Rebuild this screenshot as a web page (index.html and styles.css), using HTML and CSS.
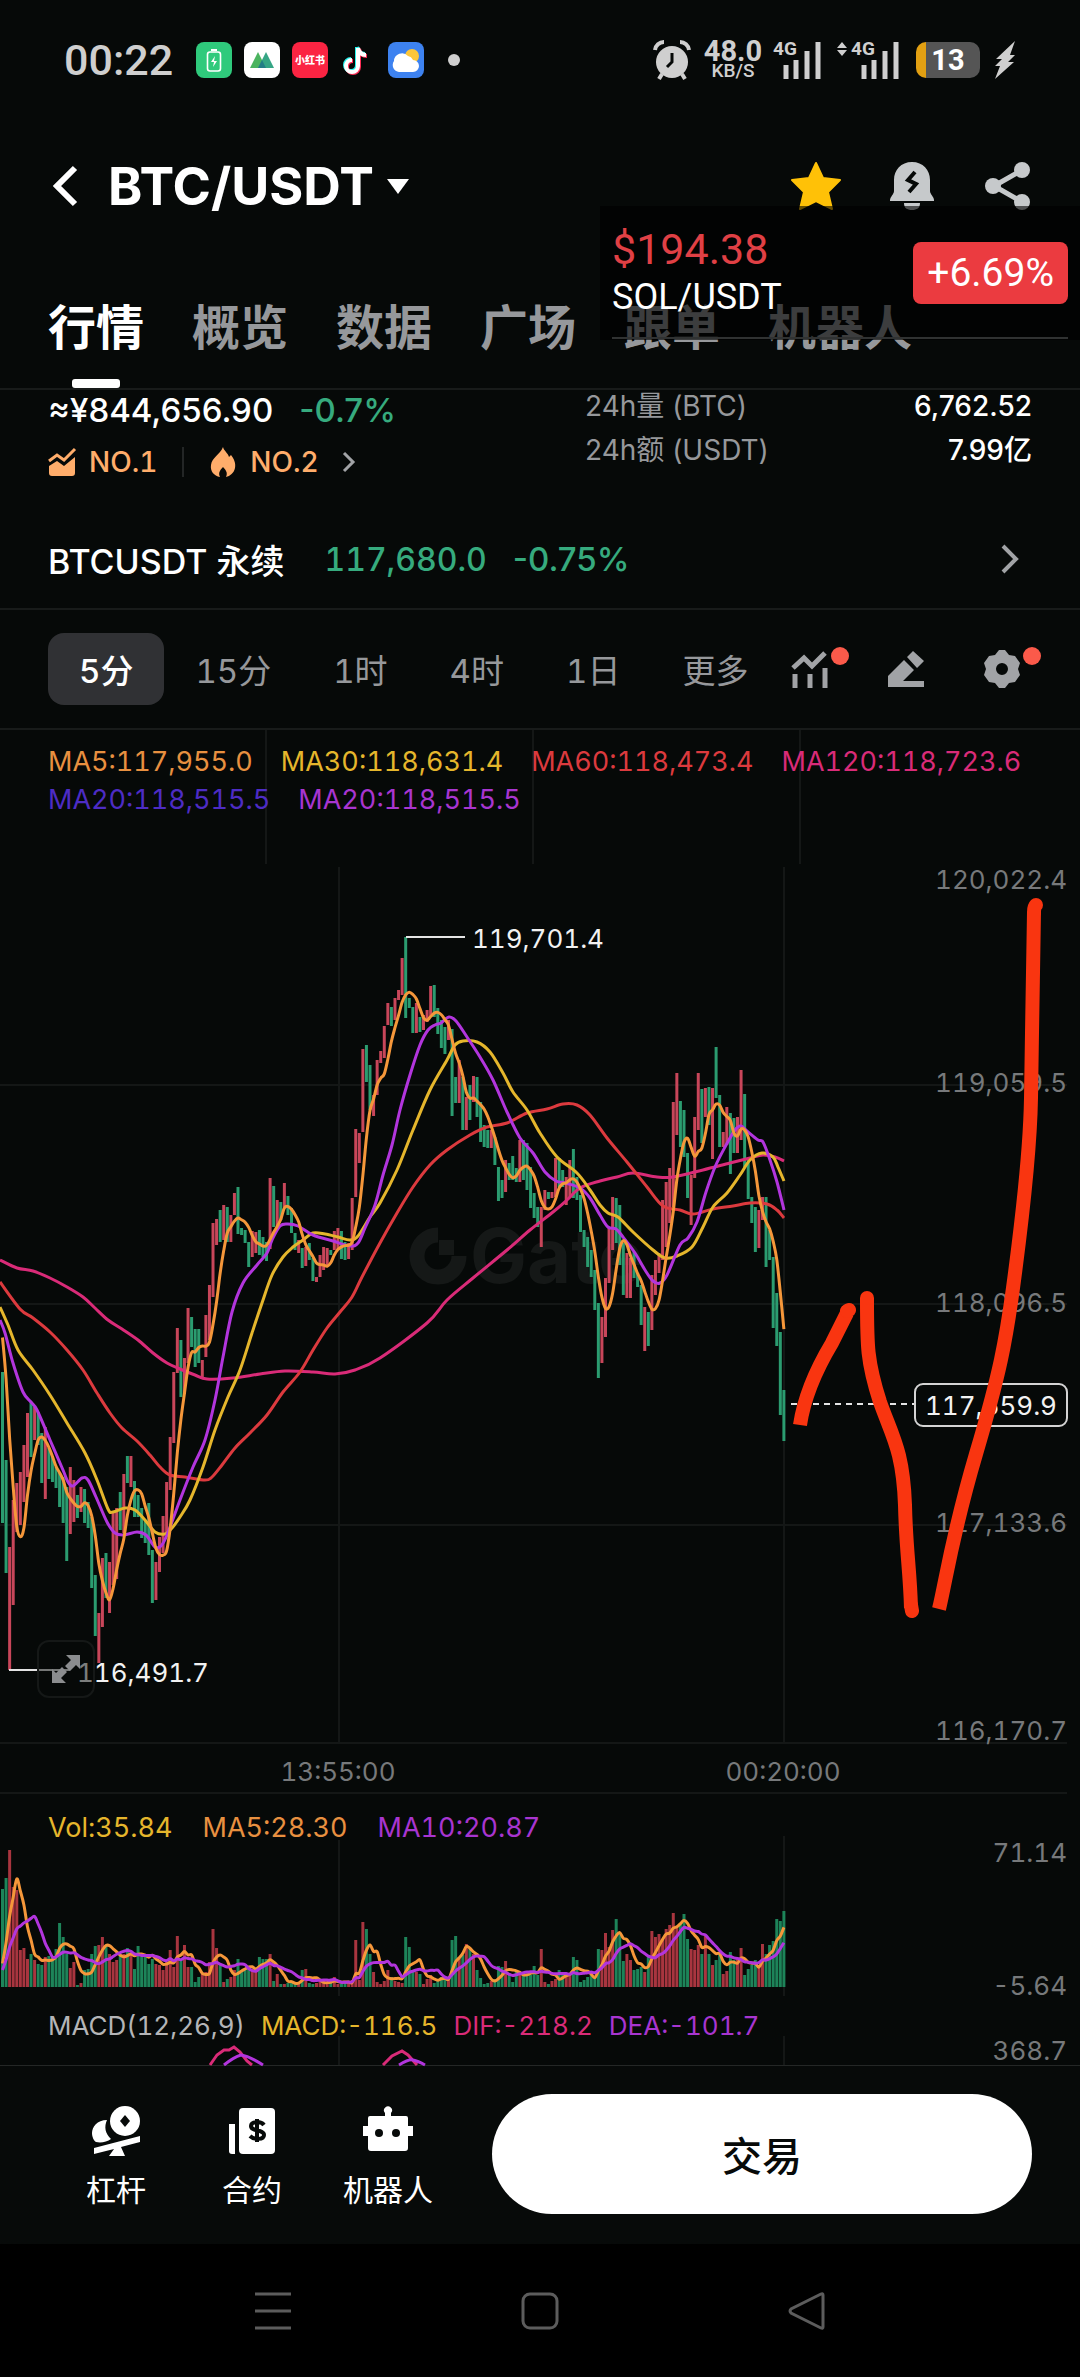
FILE: index.html
```html
<!DOCTYPE html>
<html lang="zh-CN">
<head>
    <meta charset="UTF-8" />
    <meta name="viewport" content="width=device-width, initial-scale=1.0" />
    <title>BTC/USDT</title>
    <link rel="stylesheet" href="styles.css">
</head>
<body>
    <div class="status-bar">
        <div class="status-left">
            <span class="clock">00:22</span>
            <svg class="app-icon" viewBox="0 0 36 36">
                <rect width="36" height="36" rx="8" fill="#2fca7c" />
                <rect x="11.500" y="10" width="13" height="19" rx="2.500" fill="none" stroke="#fff" stroke-width="1.600" />
                <path d="M15 8h6" stroke="#fff" stroke-width="2" />
                <path d="M19 14l-4 6h3l-1 5 4-6h-3z" fill="#fff" />
            </svg>
            <svg class="app-icon" viewBox="0 0 36 36">
                <rect width="36" height="36" rx="8" fill="#fff" />
                <path d="M6 26l8-16 8 16z" fill="#4bb45f" />
                <path d="M14 26l8-16 8 16z" fill="#36a585" />
                <path d="M14 26l4-8 4 8z" fill="#237d86" />
            </svg>
            <svg class="app-icon" viewBox="0 0 36 36">
                <rect width="36" height="36" rx="8" fill="#fb2442" />
                <text x="18" y="22" text-anchor="middle" class="red-note">小红书</text>
            </svg>
            <svg class="app-icon" viewBox="0 0 36 36">
                <g fill="none" stroke-width="4">
                    <path d="M17 5v18a6 6 0 1 1-6-6M17 5c1 5 4 7 8 7" stroke="#25f4ee" />
                    <path d="M19 7v18a6 6 0 1 1-6-6M19 7c1 5 4 7 8 7" stroke="#fe2c55" />
                    <path d="M18 6v18a6 6 0 1 1-6-6M18 6c1 5 4 7 8 7" stroke="#fff" />
                </g>
            </svg>
            <svg class="app-icon" viewBox="0 0 36 36">
                <rect width="36" height="36" rx="8" fill="#3d82f0" />
                <circle cx="24" cy="14" r="7" fill="#fcc63a" />
                <path d="M11 30a7 7 0 0 1-5-11 8 8 0 0 1 14-5 7 7 0 0 1 5 4 6 6 0 0 1 0 12z" fill="#fff" />
            </svg>
            <span class="more-dot"></span>
        </div>
        <div class="status-right">
            <svg class="alarm" viewBox="0 0 38 40">
                <circle cx="19" cy="22" r="16" />
                <path d="M2 10a9 9 0 0 1 9-8M27 2a9 9 0 0 1 9 8" class="alarm-ear" />
                <path d="M9 34l-3 5M29 34l3 5" class="alarm-foot" />
                <path d="M19 13v9l-5 5" class="alarm-hand" />
            </svg>
            <div class="speed"><b>48.0</b><span>KB/S</span></div>
            <div class="signal">
                <span>4G</span>
                <svg viewBox="0 0 40 38"><path d="M3 24v14M13 19v19M24 10v28M35 1v37" /></svg>
            </div>
            <div class="signal second">
                <svg class="arrows" viewBox="0 0 10 16"><path d="M0 7l5-6 5 6zM0 9l5 6 5-6z" /></svg>
                <span>4G</span>
                <svg viewBox="0 0 40 38"><path d="M3 24v14M13 19v19M24 10v28M35 1v37" /></svg>
            </div>
            <div class="battery">13</div>
            <svg class="bolt" viewBox="0 0 22 38"><path d="M21 0L2 18h6L1 25h5L1 38 20 21h-6l7-7h-5z" /></svg>
        </div>
    </div>

    <header class="header">
        <button class="icon-btn back" aria-label="返回"><svg viewBox="0 0 28 42"><path d="M23 3L5 21l18 18" /></svg></button>
        <button class="pair">BTC/USDT <svg viewBox="0 0 24 17"><path d="M1 1h22L12 16z" /></svg></button>
        <div class="header-actions">
            <button class="icon-btn" aria-label="收藏">
                <svg viewBox="0 0 50 50"><path class="star" d="M25 2l7 15 17 2-12 12 4 17-16-8-16 8 4-17L1 19l17-2z" /></svg>
            </button>
            <button class="icon-btn" aria-label="提醒">
                <svg viewBox="0 0 50 50">
                    <path class="light" d="M25 1c11 0 18 8 18 18v11c0 3 4 6 4 9v1H3v-1c0-3 4-6 4-9V19C7 9 14 1 25 1zM17 42h16c0 5-3 7-8 7s-8-2-8-7z" />
                    <path d="M28 11l-7 8 8 4-7 8" fill="none" stroke="#060908" stroke-width="4" />
                </svg>
            </button>
            <button class="icon-btn" aria-label="分享">
                <svg viewBox="0 0 50 50">
                    <path d="M39 9L11 25l28 16" fill="none" stroke="#c6c9cb" stroke-width="5" />
                    <circle class="light" cx="10" cy="25" r="8" />
                    <circle class="light" cx="39" cy="9" r="8" />
                    <circle class="light" cx="39" cy="41" r="8" />
                </svg>
            </button>
        </div>
    </header>

    <nav class="tabs">
        <a href="#" class="active">行情</a>
        <a href="#">概览</a>
        <a href="#">数据</a>
        <a href="#">广场</a>
        <a href="#">跟单</a>
        <a href="#">机器人</a>
    </nav>

    <!-- floating price widget -->
    <div class="ticker">
        <div class="ticker-text">
            <span class="ticker-price">$194.38</span>
            <span class="ticker-pair">SOL/USDT</span>
        </div>
        <span class="ticker-badge">+6.69%</span>
    </div>

    <section class="summary">
        <div class="summary-left">
            <div class="fiat"><span>≈¥844,656.90</span><span class="green">-0.7%</span></div>
            <div class="ranks">
                <svg class="rank-icon" viewBox="0 0 28 30"><path d="M1 14l8-6 7 5L27 2" fill="none" stroke="#ffad6b" stroke-width="3" /><path d="M1 19l8-5 7 5 11-9v16a3 3 0 0 1-3 3H4a3 3 0 0 1-3-3z" /></svg>
                <a href="#">NO.1</a>
                <span class="divider"></span>
                <svg class="rank-icon" viewBox="0 0 28 30"><path d="M14 0c1 4 5 6 6 10l2-2c3 4 5 8 4 13-1 5-5 8-9 9 2-4 0-7-3-10-3 3-5 6-3 10-6-1-10-6-9-12C3 10 11 8 14 0z" /></svg>
                <a href="#">NO.2</a>
                <svg class="rank-arrow" viewBox="0 0 14 22"><path d="M2 2l9 9-9 9" /></svg>
            </div>
        </div>
        <dl class="stats">
            <dt>24h量 (BTC)</dt><dd>6,762.52</dd>
            <dt>24h额 (USDT)</dt><dd>7.99亿</dd>
        </dl>
    </section>

    <a href="#" class="contract">
        <span>BTCUSDT 永续</span>
        <span class="green contract-price">117,680.0</span>
        <span class="green contract-change">-0.75%</span>
        <svg viewBox="0 0 20 32"><path d="M3 3l13 13L3 29" /></svg>
    </a>

    <div class="toolbar">
        <button class="period active">5分</button>
        <button class="period">15分</button>
        <button class="period">1时</button>
        <button class="period">4时</button>
        <button class="period">1日</button>
        <button class="period more">更多</button>
        <div class="tools">
            <button class="tool new" aria-label="指标">
                <svg viewBox="0 0 40 40"><path d="M3 19L14 9l8 8L35 4M5 25v14M20 25v14M35 19v20" fill="none" stroke="#a1a3a6" stroke-width="5" /></svg>
            </button>
            <button class="tool" aria-label="画线">
                <svg viewBox="0 0 40 40"><path d="M2 38V27l16-16 10 10-11 11h21v6zM21 8l6-6 11 10-7 7z" /></svg>
            </button>
            <button class="tool new" aria-label="设置">
                <svg viewBox="0 0 40 40"><path fill-rule="evenodd" d="M17 1h6l4 5 6 1 5 7-2 6 2 6-5 7-6 1-4 5h-6l-4-5-6-1-5-7 2-6-2-6 5-7 6-1zM20 14a6 6 0 1 0 0 12 6 6 0 0 0 0-12z" /></svg>
            </button>
        </div>
    </div>

    <main class="chart">
        <div class="legend ma-legend">
            <span class="c-orange">MA5:117,955.0</span>
            <span class="c-yellow">MA30:118,631.4</span>
            <span class="c-red">MA60:118,473.4</span>
            <span class="c-pink">MA120:118,723.6</span>
            <span class="c-indigo">MA20:118,515.5</span>
            <span class="c-purple">MA20:118,515.5</span>
        </div>

        <div class="kline">
            <svg viewBox="0 864 1080 930">
                <path class="grid" d="M339 867V1743M784 867V1743M0 1085H1067M0 1304H1067M0 1525H1067M0 1743H1067M0 1793H1067" />
                <g class="watermark">
                    <path d="M438 1235a21 21 0 1 0 21 21" fill="none" stroke="#151817" stroke-width="15" />
                    <rect x="439" y="1240" width="15" height="15" />
                    <text x="470" y="1283">Gate</text>
                </g>
                <g id="candles"></g>
                <g id="ma-lines" class="lines"></g>
                <g class="axis">
                    <text x="1067" y="889">120,022.4</text>
                    <text x="1067" y="1092">119,059.5</text>
                    <text x="1067" y="1312">118,096.5</text>
                    <text x="1067" y="1532">117,133.6</text>
                    <text x="1067" y="1740">116,170.7</text>
                </g>
                <g class="axis time">
                    <text x="338" y="1781">13:55:00</text>
                    <text x="783" y="1781">00:20:00</text>
                </g>
                <path class="pointer" d="M406 937H465M9 1670H70" />
                <text class="mark" x="472" y="948">119,701.4</text>
                <text class="mark" x="77" y="1682">116,491.7</text>
                <path class="pointer dashed" d="M791 1404H914" />
                <rect class="price-box" x="915" y="1384" width="152" height="42" rx="8" />
                <text class="mark price" x="991" y="1415">117,659.9</text>
                <!-- hand-drawn forecast -->
                <g class="marker">
                    <path d="M800 1425C804 1398 817 1368 832 1343L847 1313" />
                    <path d="M847 1311l2-1M867 1298v2M911 1605l1 6M1034 912q0-5 2-7" class="cap" />
                    <path d="M867 1300C867 1345 867 1362 880 1402C892 1436 903 1450 905 1505C906 1550 910 1570 911 1608" />
                    <path d="M939 1609C946 1580 952 1535 976 1454S1006 1340 1013 1288S1030 1160 1031 1098S1033 960 1034 912" />
                </g>
            </svg>
            <button class="expand" aria-label="全屏">
                <svg viewBox="0 0 30 30"><path d="M15 1h14v14l-4-4-6 6-5-5 6-6zM1 15l4 4 6-6 5 5-6 6 5 5H1z" /></svg>
            </button>
        </div>

        <div class="legend vol-legend">
            <span class="c-yellow">Vol:35.84</span>
            <span class="c-orange">MA5:28.30</span>
            <span class="c-purple">MA10:20.87</span>
        </div>
        <svg viewBox="0 1846 1080 150">
            <path class="grid" d="M339 1840V1996M784 1836V1996" />
            <g id="volume"></g>
            <g id="vol-lines" class="lines"></g>
            <g class="axis">
                <text x="1067" y="1862">71.14</text>
                <text x="1067" y="1995">-5.64</text>
            </g>
        </svg>

        <div class="legend macd-legend">
            <span>MACD(12,26,9)</span>
            <span class="c-yellow">MACD:-116.5</span>
            <span class="c-pink">DIF:-218.2</span>
            <span class="c-purple">DEA:-101.7</span>
        </div>
        <svg viewBox="0 2044 1080 21">
            <path class="grid" d="M339 2036V2065M784 2036V2065" />
            <g class="lines">
                <path stroke="#d92b78" d="M210 2065l7-10 7-5h5l5-3 6 5 7 9 5 4M383 2065l9-9 10-5 6 4 9 10" />
                <path stroke="#b235dd" d="M224 2065q10-8 17-10 8 1 22 10M399 2065q10-6 14-5 5 1 12 5" />
            </g>
            <g class="axis"><text x="1067" y="2060">368.7</text></g>
        </svg>
    </main>

    <footer class="actions">
        <a href="#" class="shortcut">
            <svg viewBox="0 0 50 50">
                <circle cx="34" cy="15" r="15" /><path d="M34 9l5 6-5 6-5-6z" class="hole" />
                <path d="M16 14C6 14 1 21 1 27c0 4 2 8 4 9 5 1 11 0 15-3-6-6-7-12-4-19zM3 42l46-12v6L30 41l4 9H18l5-7-20 5z" />
            </svg>
            <span>杠杆</span>
        </a>
        <a href="#" class="shortcut">
            <svg viewBox="0 0 50 50">
                <path d="M2 18h6v30H5a3 3 0 0 1-3-3z" />
                <rect x="12" y="2" width="36" height="46" rx="4" />
                <path d="M37 19c-3-4-13-4-13 1 0 6 13 3 13 9 0 5-10 5-14 1M30 13v23" fill="none" stroke="#070a09" stroke-width="4" />
            </svg>
            <span>合约</span>
        </a>
        <a href="#" class="shortcut">
            <svg viewBox="0 0 50 50">
                <path d="M22 10V7a4 4 0 1 1 6 0v3h15q2 0 2 2v8h5v10h-5v12q0 3-3 3H8q-3 0-3-3V30H0V20h5v-8q0-2 2-2z" />
                <circle cx="16" cy="27" r="4" class="hole" /><circle cx="33" cy="27" r="4" class="hole" />
            </svg>
            <span>机器人</span>
        </a>
        <button class="trade">交易</button>
    </footer>

    <div class="system-nav">
        <button aria-label="最近任务"><svg viewBox="0 0 38 38"><path d="M1 2h36M1 19h36M1 36h36" /></svg></button>
        <button aria-label="主页"><svg viewBox="0 0 38 38"><rect x="2" y="2" width="34" height="34" rx="7" /></svg></button>
        <button aria-label="后退"><svg viewBox="0 0 38 38"><path d="M35 3v32q0 2-2 1L3 21q-2-2 0-4L33 2q2-1 2 1z" /></svg></button>
    </div>

    <script src="chart.js"></script>
</body>
</html>
```

FILE: styles.css
```css
* {
    box-sizing: border-box;
}

body {
    margin: 0;
    position: relative;
    background-color: #060908;
    color: #fff;
    font-family: Inter, "Noto Sans CJK SC", sans-serif;
}

a {
    color: inherit;
    text-decoration: none;
}

button {
    padding: 0;
    border: none;
    background: none;
    color: inherit;
    font-family: inherit;
    cursor: pointer;
}

svg {
    display: block;
    overflow: visible;
}

.green {
    color: #36ab7e;
}

/* status bar */
.status-bar {
    display: flex;
    justify-content: space-between;
    align-items: center;
    height: 120px;
    padding: 0 64px;
    color: #cfcfcf;
    font-family: Roboto, sans-serif;
}

.status-left,
.status-right {
    display: flex;
    align-items: center;
}

.status-left {
    gap: 12px;
}

.clock {
    width: 120px;
    font-size: 43px;
    font-weight: 500;
}

.app-icon {
    width: 36px;
    height: 36px;
}

.red-note {
    fill: #fff;
    font: 900 10px "Noto Sans CJK SC", sans-serif;
}

.more-dot {
    width: 12px;
    height: 12px;
    margin-left: 12px;
    border-radius: 50%;
    background-color: #cfcfcf;
}

.status-right {
    fill: #cfcfcf;
}

.alarm {
    width: 38px;
    height: 40px;
    margin-right: 12px;
}

.alarm-ear,
.alarm-foot {
    fill: none;
    stroke: #cfcfcf;
    stroke-width: 4;
}

.alarm-hand {
    fill: none;
    stroke: #060908;
    stroke-width: 3;
}

.speed {
    display: flex;
    flex-direction: column;
    align-items: center;
    width: 60px;
    margin-right: 10px;
}

.speed b {
    font-size: 29px;
    font-weight: 700;
    line-height: 22px;
}

.speed span {
    font-size: 19px;
    font-weight: 500;
    line-height: 18px;
}

.signal {
    display: flex;
    align-items: flex-start;
    height: 38px;
}

.signal span {
    width: 10px;
    font-size: 19px;
    font-weight: 700;
    line-height: 16px;
}

.signal svg {
    width: 40px;
    height: 38px;
    stroke: #cfcfcf;
    stroke-width: 5;
}

.signal.second {
    margin: 0 15px 0 14px;
}

.signal .arrows {
    width: 10px;
    height: 16px;
    margin-right: 4px;
    stroke: none;
}

.battery {
    width: 64px;
    height: 36px;
    margin-right: 14px;
    border-radius: 10px;
    background: linear-gradient(to right, #e2a012 0, #e2a012 10px, #555 10px);
    color: #fff;
    font-size: 29px;
    font-weight: 700;
    line-height: 36px;
    text-align: center;
}

.bolt {
    width: 22px;
    height: 38px;
}

/* header */
.header {
    display: flex;
    align-items: center;
    height: 132px;
    padding: 0 47px 0 48px;
}

.back svg {
    width: 28px;
    height: 42px;
    margin: 0 28px 0 4px;
    fill: none;
    stroke: #fff;
    stroke-width: 6;
}

.pair {
    display: flex;
    align-items: center;
    gap: 12px;
    font-size: 52px;
    font-weight: 700;
}

.pair svg {
    width: 24px;
    height: 17px;
    fill: #fff;
}

.header-actions {
    display: flex;
    gap: 46px;
    margin-left: auto;
}

.header-actions svg {
    width: 50px;
    height: 50px;
}

.star {
    fill: #ffc107;
    stroke: #ffc107;
    stroke-width: 2;
    stroke-linejoin: round;
}

.light {
    fill: #c6c9cb;
}

.tabs {
    display: flex;
    gap: 48px;
    padding: 52px 48px 0;
    border-bottom: 2px solid #181b1a;
    color: #96989b;
    font-size: 48px;
    font-weight: 700;
    line-height: 48px;
}

.tabs a {
    position: relative;
    padding-bottom: 36px;
    white-space: nowrap;
}

.tabs .active {
    color: #fff;
}

.tabs .active::after {
    content: "";
    position: absolute;
    left: 50%;
    bottom: 0;
    width: 48px;
    height: 9px;
    margin-left: -24px;
    border-radius: 3px;
    background-color: #fff;
}

/* floating widget */
.ticker {
    position: absolute;
    top: 206px;
    right: 0;
    display: flex;
    justify-content: space-between;
    align-items: center;
    width: 480px;
    height: 134px;
    padding: 0 12px;
    background-color: rgba(0, 0, 0, 0.6);
    font-family: Roboto, sans-serif;
}

.ticker::after {
    content: "";
    position: absolute;
    left: 12px;
    right: 12px;
    bottom: 1px;
    height: 2px;
    background-color: #303232;
}

.ticker-text {
    display: flex;
    flex-direction: column;
    line-height: 48px;
}

.ticker-price {
    color: #e04045;
    font-size: 43px;
}

.ticker-pair {
    font-size: 36px;
}

.ticker-badge {
    padding: 0 14px;
    border-radius: 8px;
    background-color: #eb3b40;
    font-size: 39px;
    line-height: 62px;
}

/* price summary */
.summary {
    display: flex;
    justify-content: space-between;
    height: 122px;
    padding: 0 48px;
}

.fiat {
    display: flex;
    gap: 26px;
    font-size: 33px;
    font-weight: 500;
    line-height: 40px;
}

.ranks {
    display: flex;
    align-items: center;
    gap: 13px;
    margin-top: 12px;
    color: #ffad6b;
    font-size: 28px;
    font-weight: 500;
    line-height: 40px;
    font-variant-numeric: tabular-nums;
}

.rank-icon {
    width: 28px;
    height: 30px;
    fill: #ffad6b;
}

.divider {
    width: 2px;
    height: 30px;
    margin: 0 12px;
    background-color: #232626;
}

.rank-arrow {
    width: 14px;
    height: 22px;
    margin-left: 10px;
    fill: none;
    stroke: #a1a3a6;
    stroke-width: 3;
}

.stats {
    display: grid;
    grid-template-columns: auto auto;
    justify-content: space-between;
    align-content: start;
    row-gap: 12px;
    width: 447px;
    margin: 0;
    font-size: 28px;
    line-height: 32px;
}

.stats dt {
    color: #96989b;
}

.stats dd {
    margin: 0;
    font-weight: 500;
    text-align: right;
}

.contract {
    display: flex;
    align-items: center;
    height: 96px;
    padding: 0 48px 2px;
    font-size: 34px;
    font-weight: 500;
}

.contract-price {
    margin: 0 26px 0 40px;
    font-size: 32px;
    font-variant-numeric: tabular-nums;
}

.contract-change {
    font-size: 33px;
}

.contract svg {
    width: 20px;
    height: 32px;
    margin: 0 12px 0 auto;
    fill: none;
    stroke: #a1a3a6;
    stroke-width: 4;
}

/* period toolbar */
.toolbar {
    display: flex;
    align-items: center;
    height: 122px;
    padding: 0 48px;
    border-top: 2px solid #181b1a;
    border-bottom: 2px solid #181b1a;
}

.period {
    height: 72px;
    padding: 0 31px;
    border-radius: 16px;
    color: #96989b;
    font-size: 33px;
    white-space: nowrap;
    font-variant-numeric: tabular-nums;
}

.period.active {
    background-color: #303134;
    color: #fff;
    font-weight: 500;
}

.period.more {
    padding-right: 0;
}

.tools {
    display: flex;
    gap: 36px;
    margin-left: auto;
}

.tool {
    position: relative;
    width: 60px;
    height: 60px;
}

.tool svg {
    width: 40px;
    height: 40px;
    margin: 0 auto;
    fill: #a1a3a6;
}

.tool.new::after {
    content: "";
    position: absolute;
    top: 8px;
    right: -9px;
    width: 18px;
    height: 18px;
    border-radius: 50%;
    background-color: #fb5a4a;
}

/* chart */
.chart {
    border-bottom: 1px solid #242726;
}

.legend {
    display: flex;
    flex-wrap: wrap;
    padding: 0 48px;
    color: #b4b5b7;
    font-size: 27px;
    line-height: 36px;
    white-space: nowrap;
    font-variant-numeric: tabular-nums;
}

.ma-legend {
    gap: 2px 28px;
    align-content: flex-start;
    height: 134px;
    padding-top: 14px;
    background: repeating-linear-gradient(to right, transparent 0, transparent 30.7%, #141716 30.7%, #141716 30.9%) no-repeat;
    background-size: 80% 100%;
}

.vol-legend {
    column-gap: 30px;
    padding-top: 16px;
}

.macd-legend {
    column-gap: 16px;
    padding-top: 12px;
    font-size: 26px;
}

.c-orange { color: #e89040; }
.c-yellow { color: #e5b62c; }
.c-red { color: #dc3a3e; }
.c-pink { color: #d92b78; }
.c-indigo { color: #4d2cc4; }
.c-purple { color: #a835d0; }

.kline {
    position: relative;
}

.grid {
    fill: none;
    stroke: #141716;
    stroke-width: 2;
}

.watermark {
    fill: #151817;
    font-size: 76px;
    font-weight: 700;
}

.lines {
    fill: none;
    stroke-width: 3;
}

.bar {
    fill: none;
    stroke-width: 3;
}

.bar.up { stroke: #c8465a; }
.bar.down { stroke: #2b9c70; }
.vol.up { stroke: #a8353f; }
.vol.down { stroke: #1d8459; }

.axis,
.mark {
    font-size: 26px;
    font-variant-numeric: tabular-nums;
}

.axis {
    fill: #77797b;
    text-anchor: end;
}

.axis.time,
.price {
    text-anchor: middle;
}

.mark {
    fill: #f2f2f2;
}

.pointer {
    fill: none;
    stroke: #e4e4e4;
    stroke-width: 2;
}

.dashed {
    stroke-dasharray: 6 5;
}

.price-box {
    fill: #060908;
    stroke: #d4d4d4;
    stroke-width: 2;
}

.marker {
    fill: none;
    stroke: #f93510;
    stroke-width: 14;
}

.cap {
    stroke-linecap: round;
}

.expand {
    position: absolute;
    left: 37px;
    bottom: 96px;
    width: 58px;
    height: 58px;
    border: 2px solid #151817;
    border-radius: 12px;
    background-color: rgba(6, 9, 8, 0.5);
}

.expand svg {
    width: 30px;
    height: 30px;
    margin: 0 auto;
    fill: #8b8d8f;
}

/* bottom */
.actions {
    display: flex;
    height: 178px;
    padding: 28px 48px 30px;
    background-color: #070a09;
}

.shortcut {
    width: 136px;
    padding-top: 12px;
    font-size: 30px;
    line-height: 44px;
    text-align: center;
}

.shortcut svg {
    width: 50px;
    height: 50px;
    margin: 0 auto 12px;
    fill: #fff;
}

.shortcut .hole {
    fill: #070a09;
}

.trade {
    flex: 1;
    margin-left: 36px;
    border-radius: 60px;
    background-color: #fff;
    color: #070a09;
    font-size: 40px;
    font-weight: 500;
}

.system-nav {
    display: flex;
    height: 133px;
    padding: 0 140px;
    background-color: #000;
}

.system-nav button {
    flex: 1;
}

.system-nav svg {
    width: 38px;
    height: 38px;
    margin: 0 auto;
    fill: none;
    stroke: #5c5c5c;
    stroke-width: 3;
}
```

FILE: chart.js
```js
const STEP = 3.568;
const START = 2.5;
const VOLUME_BASE = 1987;

// direction (g = down, r = up), high and low of each candle in chart units
const candles = `
g1372-1523 g1460-1573 r1547-1670 r1500-1605 r1483-1532 r1472-1525 r1445-1502 r1413-1477 g1402-1457 r1407-1440
g1412-1445 g1433-1483 r1427-1499 g1448-1479 g1457-1482 g1467-1488 g1473-1507 g1477-1523 g1487-1561 r1467-1534
r1480-1522 g1495-1518 r1487-1512 g1489-1523 g1502-1528 g1517-1588 g1575-1636 r1613-1663 r1558-1627 g1553-1598
r1562-1613 r1512-1585 r1508-1579 g1492-1530 r1474-1533 g1456-1483 r1456-1487 g1481-1517 g1495-1517 g1508-1538
g1520-1543 g1503-1555 g1550-1603 r1562-1600 r1537-1572 r1516-1553 r1482-1533 r1437-1490 r1372-1443 r1328-1373
g1340-1397 r1358-1394 r1308-1363 g1317-1347 g1329-1367 g1329-1363 r1360-1377 r1315-1357 r1285-1340 r1223-1297
r1219-1245 g1210-1242 r1205-1240 g1207-1242 r1215-1242 r1193-1215 g1187-1234 g1228-1235 g1230-1243 g1242-1267
r1231-1257 r1232-1253 g1230-1255 g1237-1257 g1242-1261 r1178-1249 g1186-1227 r1200-1228 g1202-1220 r1183-1207
g1196-1215 g1208-1233 g1233-1250 r1240-1253 g1248-1268 r1247-1266 g1243-1260 g1258-1281 r1277-1282 r1255-1277
r1247-1270 r1248-1267 g1250-1255 r1231-1250 r1228-1250 g1231-1259 g1242-1260 r1243-1259 r1198-1250 r1129-1197
r1133-1163 r1049-1132 g1045-1082 g1065-1110 r1095-1116 r1060-1095 r1051-1063 r1026-1058 r1003-1025 g1007-1026
r998-1020 r990-1000 r958-995 g937-1018 g998-1008 g1007-1033 r1003-1033 g1017-1032 r1015-1030 r1010-1022
r986-1017 g985-1017 g1008-1034 g1020-1048 g1027-1054 r1020-1040 g1029-1116 g1077-1103 r1060-1103 g1077-1130
r1097-1130 g1085-1120 r1076-1102 g1077-1117 g1102-1142 g1125-1147 g1130-1148 r1130-1148 g1137-1165 g1167-1201
g1180-1198 r1160-1192 g1163-1180 g1156-1180 g1168-1182 r1140-1182 g1140-1180 g1143-1190 g1167-1208 g1193-1218
g1207-1227 r1207-1247 r1190-1210 g1192-1199 r1192-1198 r1158-1197 g1158-1187 g1170-1187 r1177-1205 r1160-1198
g1149-1198 g1177-1200 g1195-1232 g1230-1247 g1237-1267 g1250-1277 g1270-1310 g1303-1378 r1317-1363 r1278-1337
r1227-1283 r1197-1250 g1198-1243 g1205-1265 g1243-1295 r1253-1298 r1258-1298 g1252-1278 g1273-1287 g1285-1325
r1307-1351 g1312-1346 r1275-1330 r1260-1295 r1253-1273 r1200-1260 r1182-1247 r1168-1223 r1102-1207 r1073-1135
g1101-1147 g1110-1157 g1153-1198 r1175-1225 r1117-1178 r1073-1130 g1089-1143 r1088-1117 g1087-1125 r1088-1159
g1047-1098 g1095-1147 r1132-1147 r1107-1145 g1113-1174 g1118-1153 r1117-1153 r1070-1140 g1094-1167 g1160-1199
g1197-1223 g1207-1252 r1210-1248 r1197-1220 g1197-1267 g1230-1260 g1257-1328 g1293-1346 g1332-1415 g1390-1441
`.trim().split(/\s+/).map((item) => {
    const [high, low] = item.slice(1).split("-").map(Number);
    return { type: item[0] === "r" ? "up" : "down", high, low };
});

const volumes = [
    98, 109, 137, 100, 97, 37, 39, 28, 33, 27, 23, 22, 30, 31, 30, 38, 64, 50, 33, 19,
    25, 2, 4, 17, 18, 33, 41, 42, 50, 41, 33, 25, 27, 33, 33, 39, 33, 18, 41, 34,
    33, 23, 28, 23, 22, 17, 25, 37, 20, 51, 27, 42, 20, 20, 5, 10, 13, 15, 25, 58,
    39, 23, 5, 8, 10, 17, 28, 17, 18, 20, 18, 17, 30, 28, 28, 33, 6, 13, 3, 3,
    4, 4, 5, 3, 17, 18, 4, 3, 4, 6, 6, 3, 5, 10, 3, 3, 4, 5, 7, 47,
    7, 65, 58, 33, 15, 5, 3, 6, 17, 10, 6, 5, 4, 50, 40, 17, 15, 13, 3, 8,
    12, 4, 7, 10, 10, 8, 47, 51, 30, 32, 43, 38, 33, 17, 9, 3, 4, 6, 8, 21,
    20, 26, 13, 5, 17, 12, 14, 13, 12, 21, 12, 38, 5, 3, 6, 8, 17, 12, 14, 12,
    30, 27, 5, 7, 10, 15, 10, 38, 37, 54, 40, 57, 68, 53, 26, 33, 27, 17, 18, 20,
    15, 32, 56, 50, 53, 47, 58, 62, 74, 60, 63, 73, 48, 38, 37, 42, 33, 52, 33, 22,
    27, 33, 13, 16, 35, 27, 28, 39, 12, 18, 22, 27, 20, 43, 33, 42, 46, 68, 66, 76
];

const averages = [
    { color: "#d92b78", points: "0,1260 17,1268 33,1271 50,1278 67,1287 83,1297 95,1308 108,1320 122,1329 138,1340 153,1353 167,1363 180,1369 195,1375 207,1379 233,1378 260,1374 285,1371 313,1372 335,1374 355,1370 380,1358 427,1323 447,1300 473,1278 507,1250 530,1230 553,1212 567,1200 580,1188 600,1181 617,1177 633,1173 657,1177 673,1177 703,1170 730,1163 750,1158 763,1155 775,1157 784,1161" },
    { color: "#dc3a3e", points: "0,1282 20,1309 33,1318 50,1332 67,1350 83,1370 97,1393 110,1413 122,1428 137,1441 150,1455 160,1467 170,1475 185,1477 205,1480 212,1477 222,1465 235,1448 250,1433 267,1415 283,1392 300,1372 313,1350 327,1328 340,1312 352,1297 362,1277 380,1243 397,1213 413,1187 430,1165 447,1150 470,1135 487,1127 507,1123 527,1113 547,1109 563,1104 577,1105 590,1115 607,1138 627,1162 647,1187 663,1206 680,1210 693,1214 713,1209 733,1206 750,1203 767,1204 777,1210 784,1218" },
    { color: "#e5b62c", points: "0,1307 8,1325 18,1350 33,1370 50,1395 67,1423 85,1453 97,1480 108,1509 113,1512 125,1508 135,1510 145,1520 155,1532 165,1534 172,1528 180,1517 190,1500 203,1467 215,1430 228,1397 240,1370 252,1333 262,1303 272,1275 283,1257 293,1247 303,1240 313,1233 325,1234 338,1237 350,1240 358,1236 370,1217 380,1203 397,1170 413,1130 430,1090 447,1060 455,1045 463,1041 477,1042 490,1052 503,1073 513,1092 527,1110 540,1133 557,1157 577,1173 590,1190 600,1205 608,1213 618,1217 633,1232 653,1250 665,1258 677,1256 692,1247 703,1227 713,1207 727,1193 740,1175 750,1160 762,1153 773,1157 778,1167 784,1181" },
    { color: "#b235dd", points: "0,1320 5,1333 13,1363 23,1392 31,1402 37,1410 50,1440 63,1470 68,1482 73,1486 82,1478 88,1480 96,1497 107,1522 115,1533 124,1535 137,1532 146,1535 155,1547 161,1546 167,1535 180,1500 193,1467 205,1440 215,1400 223,1357 232,1312 243,1283 257,1265 267,1253 272,1240 280,1226 288,1224 298,1226 313,1235 333,1241 350,1246 358,1243 365,1228 375,1205 383,1175 392,1145 400,1110 410,1075 420,1045 428,1030 435,1025 441,1023 449,1017 456,1021 467,1037 480,1057 493,1080 507,1112 520,1138 533,1153 545,1172 556,1181 565,1183 580,1188 590,1198 600,1215 608,1227 616,1229 623,1237 635,1253 645,1270 653,1281 660,1283 667,1275 680,1245 688,1238 697,1222 706,1192 715,1167 725,1147 735,1130 741,1126 748,1132 758,1140 763,1142 770,1160 777,1182 784,1210" }
];

function xAt(i) {
    return START + i * STEP;
}

function append(parentId, d, className, color) {
    const path = document.createElementNS("http://www.w3.org/2000/svg", "path");
    path.setAttribute("d", d);
    if (className) path.setAttribute("class", className);
    if (color) path.setAttribute("stroke", color);
    document.getElementById(parentId).appendChild(path);
}

// smooth curve through all points
function curve(points) {
    let d = `M${points[0][0]} ${points[0][1]}`;
    for (let i = 0; i < points.length - 1; i++) {
        const p0 = points[i - 1] || points[i];
        const p1 = points[i];
        const p2 = points[i + 1];
        const p3 = points[i + 2] || p2;
        d += `C${p1[0] + (p2[0] - p0[0]) / 6} ${p1[1] + (p2[1] - p0[1]) / 6}`
            + ` ${p2[0] - (p3[0] - p1[0]) / 6} ${p2[1] - (p3[1] - p1[1]) / 6} ${p2[0]} ${p2[1]}`;
    }
    return d;
}

function movingAverage(values, size, before) {
    return values.map((_, i) => {
        let sum = 0;
        for (let k = 0; k < size; k++) {
            sum += i - k >= 0 ? values[i - k] : before;
        }
        return sum / size;
    });
}

candles.forEach((c, i) => {
    append("candles", `M${xAt(i)} ${c.high}V${c.low}`, "bar " + c.type);
    append("volume", `M${xAt(i)} ${VOLUME_BASE}v${-volumes[i]}`, "bar vol " + c.type);
});

averages.forEach((line) => {
    append("ma-lines", curve(line.points.split(" ").map((p) => p.split(",").map(Number))), "", line.color);
});

const middle = candles.map((c) => (c.high + c.low) / 2);
append("ma-lines", curve(movingAverage(middle, 5, 1310).map((v, i) => [xAt(i), v])), "", "#f5973a");

append("vol-lines", curve(movingAverage(volumes, 5, 5).map((v, i) => [xAt(i), VOLUME_BASE - v])), "", "#f5973a");
append("vol-lines", curve(movingAverage(volumes, 10, 8).map((v, i) => [xAt(i), VOLUME_BASE - v])), "", "#b235dd");
```
